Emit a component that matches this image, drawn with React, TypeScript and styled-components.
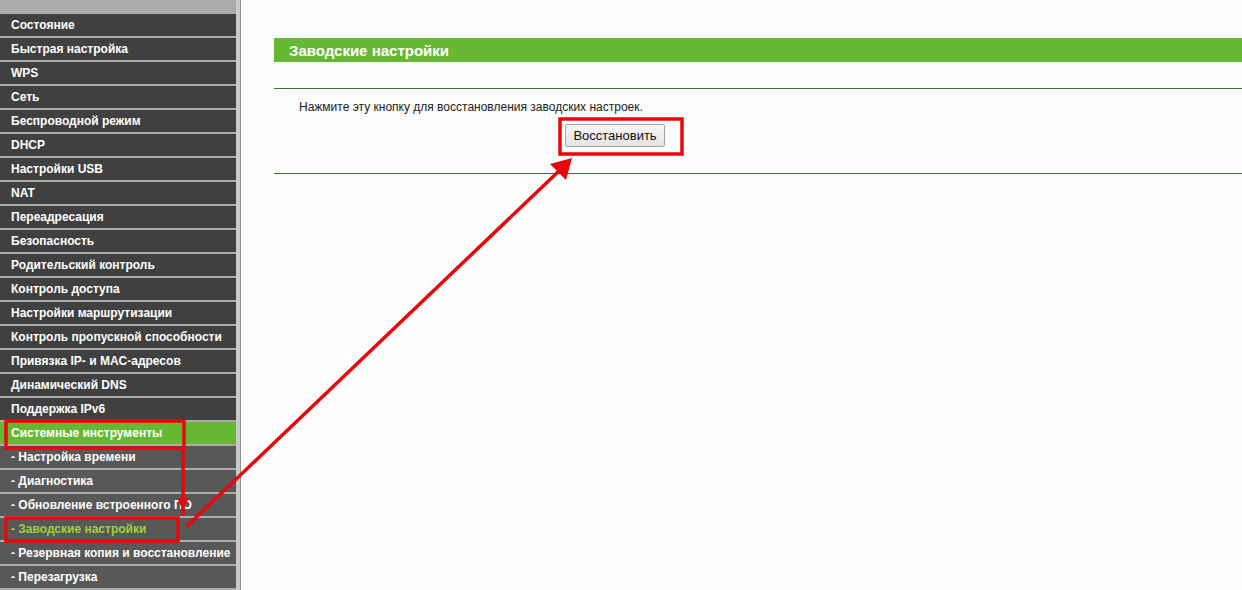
import styled, { createGlobalStyle } from 'styled-components';

const GlobalStyle = createGlobalStyle`
  html, body {
    margin: 0;
    padding: 0;
    background: #fcfcfc;
  }
  body {
    font-family: "Liberation Sans", Arial, sans-serif;
  }
`;

type MenuItem = { label: string; sub?: boolean; active?: boolean; current?: boolean };

const menu: MenuItem[] = [
  { label: 'Состояние' },
  { label: 'Быстрая настройка' },
  { label: 'WPS' },
  { label: 'Сеть' },
  { label: 'Беспроводной режим' },
  { label: 'DHCP' },
  { label: 'Настройки USB' },
  { label: 'NAT' },
  { label: 'Переадресация' },
  { label: 'Безопасность' },
  { label: 'Родительский контроль' },
  { label: 'Контроль доступа' },
  { label: 'Настройки маршрутизации' },
  { label: 'Контроль пропускной способности' },
  { label: 'Привязка IP- и MAC-адресов' },
  { label: 'Динамический DNS' },
  { label: 'Поддержка IPv6' },
  { label: 'Системные инструменты', active: true },
  { label: '- Настройка времени', sub: true },
  { label: '- Диагностика', sub: true },
  { label: '- Обновление встроенного ПО', sub: true },
  { label: '- Заводские настройки', sub: true, current: true },
  { label: '- Резервная копия и восстановление', sub: true },
  { label: '- Перезагрузка', sub: true },
];

function App() {
  return (
    <Page>
      <GlobalStyle />

      {/* левое меню */}
      <Sidebar>
        {menu.map((item) => (
          <MenuRow key={item.label} $sub={item.sub} $active={item.active} $current={item.current}>
            {item.label}
          </MenuRow>
        ))}
      </Sidebar>
      <Rail />

      {/* содержимое */}
      <Main>
        <TitleBar>Заводские настройки</TitleBar>
        <Divider />
        <Body>
          <Hint>Нажмите эту кнопку для восстановления заводских настроек.</Hint>
          <ButtonRow>
            <RestoreButton type="button">Восстановить</RestoreButton>
          </ButtonRow>
        </Body>
        <Divider />
      </Main>

      {/* красные пометки поверх скриншота */}
      <Marks width="1242" height="590" viewBox="0 0 1242 590">
        <g fill="none" stroke="#e8070b" strokeWidth="3.5">
          <rect x="560" y="119" width="122" height="35" />
          <rect x="6" y="421" width="178" height="27" />
          <rect x="6" y="518" width="172" height="23" />
        </g>
        <line x1="183" y1="448" x2="183" y2="516" stroke="#e8070b" strokeWidth="3.5" />
        <path d="M177 498 L183 510 L189 498 Z" fill="#e8070b" />
        <line x1="186" y1="527" x2="560" y2="170" stroke="#e8070b" strokeWidth="3.5" />
        <path d="M572 158 L566 180 L550 164 Z" fill="#e8070b" />
      </Marks>
    </Page>
  );
}

export default App;

const Page = styled.div`
  position: relative;
  display: flex;
  width: 1242px;
  height: 590px;
  overflow: hidden;
  background: #fcfcfc;
`;

const Sidebar = styled.nav`
  width: 236px;
  flex-shrink: 0;
  background: #ababab;
  padding-top: 12px;
  display: flex;
  flex-direction: column;
`;

const MenuRow = styled.div<{ $sub?: boolean; $active?: boolean; $current?: boolean }>`
  height: 22px;
  margin-top: 2px;
  padding-left: 11px;
  display: flex;
  align-items: center;
  font-size: 12px;
  font-weight: bold;
  white-space: nowrap;
  color: ${(p) => (p.$current ? '#9fd13a' : '#ffffff')};
  background: ${(p) => (p.$active ? '#66b832' : p.$sub ? '#585858' : '#404040')};
`;

const Rail = styled.div`
  width: 4px;
  flex-shrink: 0;
  background: #c9c9c9;
  border-right: 1px solid #8e8e8e;
`;

const Main = styled.main`
  flex: 1;
  padding: 38px 0 0 33px;
`;

const TitleBar = styled.div`
  height: 24px;
  padding-left: 15px;
  display: flex;
  align-items: center;
  background: #66b832;
  color: #ffffff;
  font-size: 15px;
  font-weight: bold;
  margin-bottom: 26px;
`;

const Divider = styled.div`
  height: 1px;
  background: #3d6e3d;
`;

const Body = styled.div`
  padding: 11px 0 26px 25px;
`;

const Hint = styled.div`
  font-size: 12px;
  line-height: 14px;
  color: #222;
`;

const ButtonRow = styled.div`
  padding: 10px 0 0 266px;
`;

const RestoreButton = styled.button`
  width: 100px;
  height: 23px;
  padding: 0;
  font-family: "Liberation Sans", Arial, sans-serif;
  font-size: 13px;
  color: #111;
  background: linear-gradient(#f6f6f6, #e4e4e4);
  border: 1px solid #a6a6a6;
  border-radius: 2px;
`;

const Marks = styled.svg`
  position: absolute;
  left: 0;
  top: 0;
  pointer-events: none;
`;
